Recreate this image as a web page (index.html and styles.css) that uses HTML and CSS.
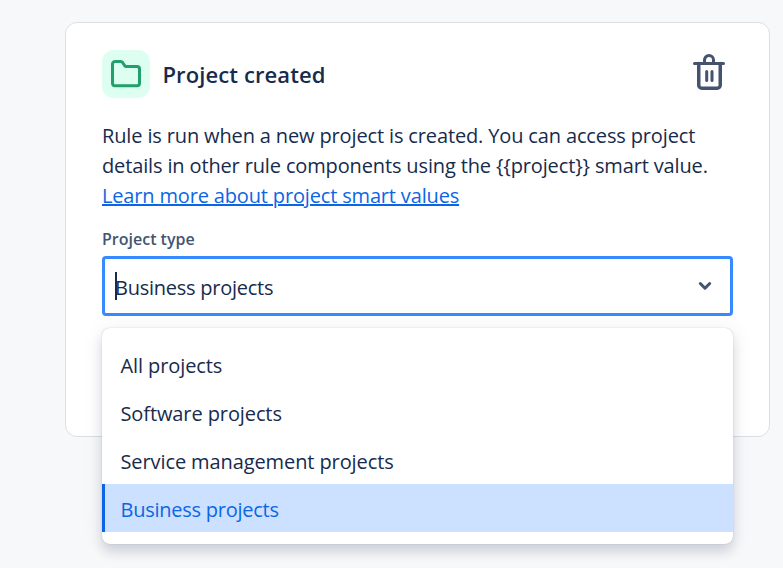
FILE: index.html
```html
<!DOCTYPE html>
<html lang="en">
<head>
<meta charset="utf-8">
<title>Project created</title>
<link rel="stylesheet" href="styles.css">
</head>
<body>
<main class="card">
  <header class="head">
    <div class="badge">
      <svg width="32" height="32" viewBox="0 0 32 32" fill="none"><path d="M2.500 6a2.500 2.500 0 0 1 2.500-2.500h5.700c.9 0 1.500.4 2 1.100l2 3.100c.4.5.9.800 1.500.800H27a2.500 2.500 0 0 1 2.500 2.500v14.300a2.500 2.500 0 0 1-2.500 2.500H5a2.500 2.500 0 0 1-2.500-2.500z" stroke="#22a06b" stroke-width="3"/></svg>
    </div>
    <h1 class="title">Project created</h1>
    <svg class="trash" width="40" height="40" viewBox="0 0 40 40" fill="none" stroke="#44546f" stroke-width="3" stroke-linecap="round" stroke-linejoin="round"><path d="M5.500 9.500h29"/><path d="M9.750 9.500v21.750a3 3 0 0 0 3 3h15.500a3 3 0 0 0 3-3V9.500" stroke-width="3.500"/><path d="M15.500 9.500V6a4.500 4.500 0 0 1 9 0v3.500"/><path d="M17.700 17.500v9M23 17.500v9"/></svg>
  </header>
  <p class="desc">Rule is run when a new project is created. You can access project details in other rule components using the {{project}} smart value. <a class="link" href="#">Learn more about project smart values</a></p>
  <label class="label">Project type</label>
  <div class="select">
    <span class="caret"></span><span class="value">Business projects</span>
    <svg class="chev" width="16" height="16" viewBox="0 0 16 16" fill="none"><path d="M3.300 5.500L8 10.200l4.700-4.700" stroke="#44546f" stroke-width="3" stroke-linecap="round" stroke-linejoin="round"/></svg>
  </div>
  <ul class="menu">
    <li class="item">All projects</li>
    <li class="item">Software projects</li>
    <li class="item">Service management projects</li>
    <li class="item item-selected">Business projects</li>
  </ul>
</main>
</body>
</html>
```
FILE: styles.css
```css
* { box-sizing: border-box; }
html, body { margin: 0; height: 100%; }
body {
  background: #f7f8f9;
  font-family: "Open Sans", "Noto Sans", sans-serif;
  color: #172b4d;
  overflow: hidden;
}
.card {
  position: relative;
  margin: 22px 13px 0 65px;
  height: 415px;
  padding: 27px 36px 0;
  background: #fff;
  border: 1px solid #dcdfe4;
  border-radius: 12px;
}
.head { display: flex; align-items: center; height: 48px; }
.badge {
  width: 48px; height: 48px;
  border-radius: 12px;
  background: #dcfff1;
  display: flex; align-items: center; justify-content: center;
}
.title { margin: 0 0 0 12.500px; font-size: 22px; letter-spacing: .1px; font-weight: 600; color: #172b4d; flex: 1; }
.trash { margin-right: 4px; }
.desc { margin: 23px 0 0; font-size: 20px; letter-spacing: -.14px; line-height: 30px; color: #172b4d; }
.link { color: #0c66e4; text-decoration: underline; letter-spacing: -.16px; }
.label { display: block; margin-top: 17px; font-size: 16px; line-height: 22px; font-weight: 600; color: #44546f; }
.select {
  display: flex; align-items: center;
  margin-top: 6px;
  width: 631px; height: 60px;
  padding: 2px 17px 0 10px;
  border: 3px solid #388bff;
  border-radius: 4px;
  background: #fff;
  font-size: 20px;
  letter-spacing: -.25px;
}
.caret { width: 2px; height: 28px; background: #172b4d; margin: -2px -2px 0 0; }
.value { flex: 1; color: #172b4d; }
.chev { margin-top: -2px; }
.menu {
  position: absolute;
  left: 36px; top: 305px;
  width: 631px; height: 216px;
  margin: 0; padding: 12px 0;
  list-style: none;
  background: #fff;
  border-radius: 8px;
  box-shadow: 0 0 1px rgba(9,30,66,.31), 0 8px 12px rgba(9,30,66,.15), 0 0 24px rgba(9,30,66,.06);
  font-size: 20px;
  letter-spacing: -.1px;
  overflow: hidden;
}
.item { height: 48px; padding: 2px 0 0 18.500px; display: flex; align-items: center; color: #172b4d; }
.item-selected {
  background: #cce0ff;
  color: #0c66e4;
  border-left: 3px solid #0c66e4;
  padding-left: 15.500px;
  letter-spacing: -.25px;
}
```
